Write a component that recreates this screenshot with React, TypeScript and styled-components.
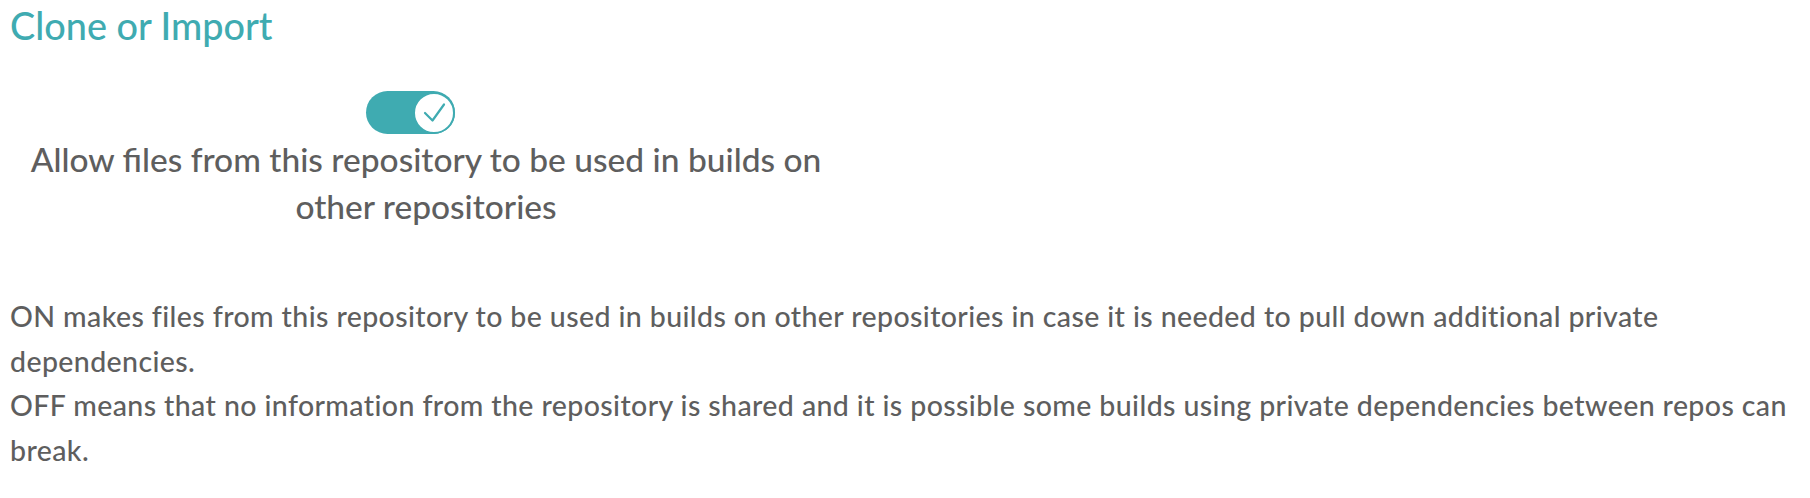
import React from "react";
import styled, { createGlobalStyle } from "styled-components";

const GlobalStyle = createGlobalStyle`
  html, body { margin: 0; padding: 0; background: #ffffff; }
  body { font-family: Lato, "Noto Sans", sans-serif; -webkit-font-smoothing: antialiased; }
`;

const Page = styled.div`
  padding: 2px 12px 0 8px;
  display: flex;
  flex-direction: column;
`;

const Heading = styled.h2`
  margin: 0;
  font-size: 37.8px;
  line-height: 48px;
  font-weight: 500;
  color: #3fabb1;
  padding-left: 2px;
`;

const SwitchField = styled.div`
  width: 836px;
  margin-top: 41px;
  display: flex;
  flex-direction: column;
  align-items: center;
`;

const Track = styled.button<{ $on: boolean }>`
  width: 89px;
  height: 43px;
  margin-right: 31px;
  padding: 0;
  border: none;
  border-radius: 22px;
  background: ${(p) => (p.$on ? "#3fabb1" : "#cccccc")};
  display: flex;
  align-items: center;
  justify-content: ${(p) => (p.$on ? "flex-end" : "flex-start")};
  cursor: pointer;
`;

const Knob = styled.span`
  width: 42px;
  height: 42px;
  box-sizing: border-box;
  border-radius: 50%;
  border: 2px solid #3fabb1;
  background: #ffffff;
  display: flex;
  align-items: center;
  justify-content: center;
`;

const SwitchLabel = styled.div`
  margin-top: 2px;
  font-size: 33.5px;
  line-height: 47px;
  font-weight: 500;
  color: #5e5e5e;
  text-align: center;
`;

const Description = styled.p`
  margin: 64px 0 0 2px;
  font-size: 28.5px;
  letter-spacing: 0.4px;
  line-height: 44.7px;
  font-weight: 500;
  color: #5e5e5e;
`;

export default function App() {
  return (
    <>
      <GlobalStyle />
      <Page>
        <Heading>Clone or Import</Heading>
        <SwitchField>
          <Track $on={true} aria-pressed="true">
            <Knob>
              <svg width="23" height="21" viewBox="0 0 23 21" fill="none">
                <path d="M2 11 L9.5 18.5 L21 2.5" stroke="#3fabb1" strokeWidth="2.2" strokeLinecap="round" strokeLinejoin="round" />
              </svg>
            </Knob>
          </Track>
          <SwitchLabel>
            Allow files from this repository to be used in builds on
            <br />
            other repositories
          </SwitchLabel>
        </SwitchField>
        <Description>
          ON makes files from this repository to be used in builds on other repositories in case it is needed to pull down additional private dependencies.
          <br />
          OFF means that no information from the repository is shared and it is possible some builds using private dependencies between repos can break.
        </Description>
      </Page>
    </>
  );
}
